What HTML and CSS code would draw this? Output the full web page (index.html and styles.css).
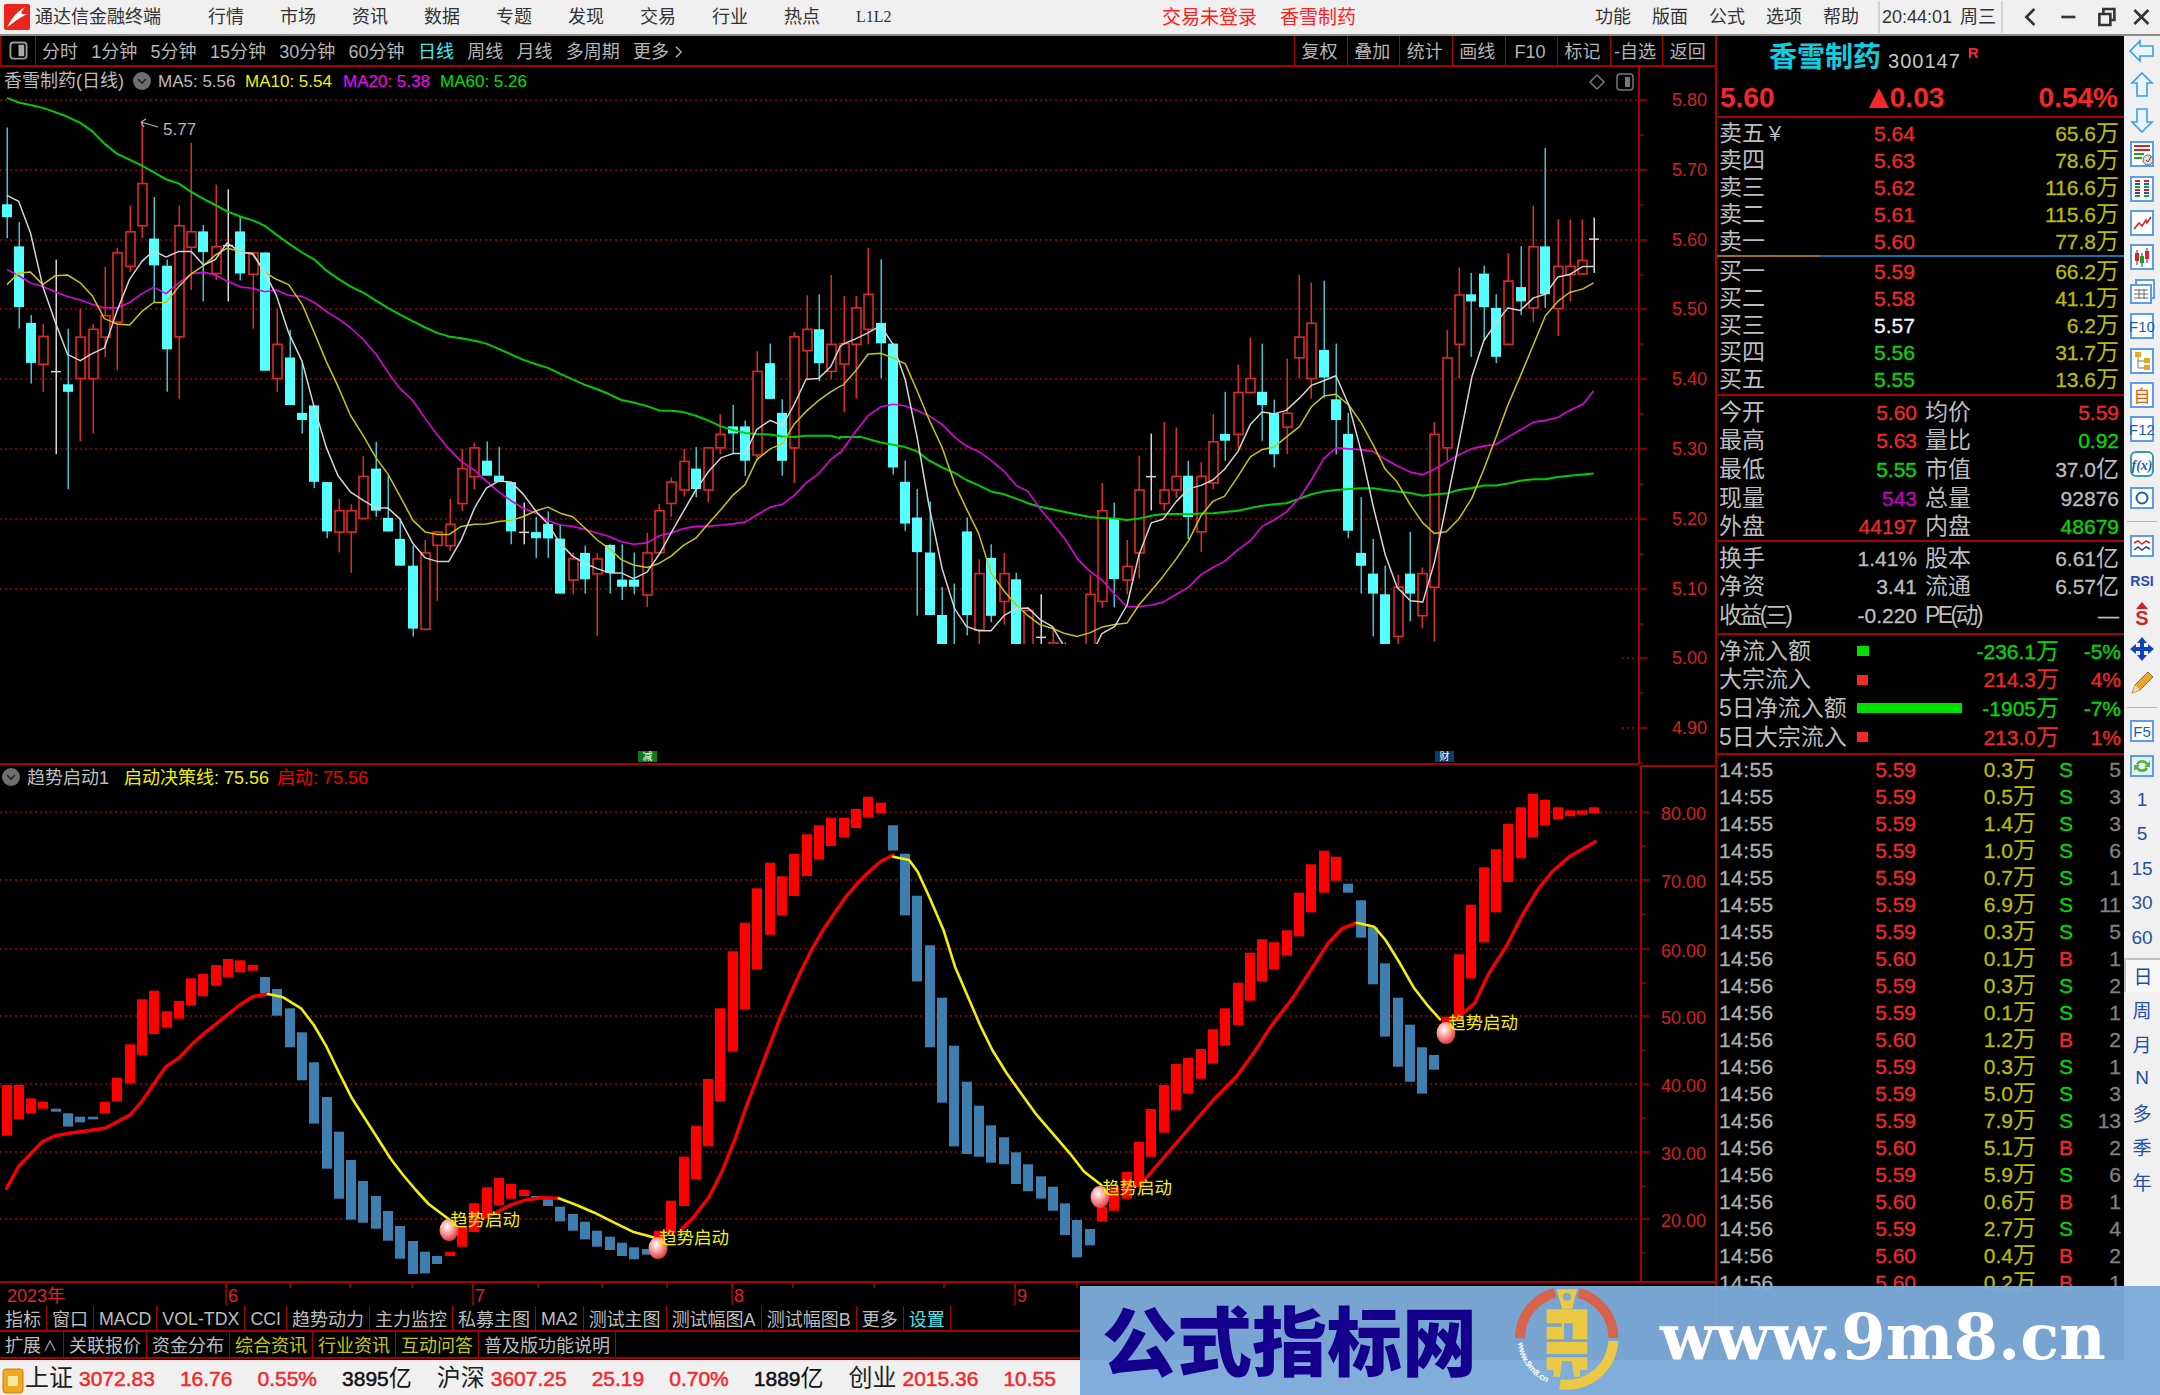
FILE: index.html
```html
<!DOCTYPE html>
<html lang="zh-CN">
<head>
<meta charset="utf-8">
<title>通达信金融终端</title>
<link rel="stylesheet" href="styles.css">
</head>
<body>
<div class="app">
  <header class="titlebar">
    <svg class="logo" viewBox="0 0 26 26"><rect width="26" height="26" rx="2" fill="#e8261c"/><path d="M3 23C8 15 10 10 21 3 16 9 16 11 23 10 15 14 12 17 3 23Z" fill="#fff"/></svg>
    <span class="app-name">通达信金融终端</span>
    <nav class="menu">
      <span>行情</span><span>市场</span><span>资讯</span><span>数据</span><span>专题</span><span>发现</span><span>交易</span><span>行业</span><span>热点</span><span class="l2">L1L2</span>
    </nav>
    <span class="alert alert-login">交易未登录</span>
    <span class="alert alert-stock">香雪制药</span>
    <nav class="menu menu-right">
      <span>功能</span><span>版面</span><span>公式</span><span>选项</span><span>帮助</span>
    </nav>
    <div class="clock"><span>20:44:01</span><span>周三</span></div>
    <div class="win-btns">
      <svg viewBox="0 0 36 24"><path d="M21 4 13 12 21 20" class="win-stroke"/></svg>
      <svg viewBox="0 0 36 24"><path d="M11 12H25" class="win-stroke"/></svg>
      <svg viewBox="0 0 36 24"><path d="M12 9H23V20H12ZM16 9V4H27V15H23" class="win-stroke"/></svg>
      <svg viewBox="0 0 36 24"><path d="M11 5 25 19M25 5 11 19" class="win-stroke"/></svg>
    </div>
  </header>

  <div class="main">
    <div class="left">
      <div class="toolbar">
        <div class="tb-toggle"><svg viewBox="0 0 20 20"><rect x="1.5" y="1.5" width="17" height="17" rx="3" class="tg-out"/><rect x="10" y="4" width="6" height="12" fill="#aaa"/></svg></div>
        <div class="tb-periods">
          <span>分时</span><span>1分钟</span><span>5分钟</span><span>15分钟</span><span>30分钟</span><span>60分钟</span><span class="on">日线</span><span>周线</span><span>月线</span><span>多周期</span><span class="more">更多<svg viewBox="0 0 10 16"><path d="M2 2 8 8 2 14" class="chev"/></svg></span>
        </div>
        <div class="tb-btns">
          <span>复权</span><span>叠加</span><span>统计</span><span>画线</span><span>F10</span><span>标记</span><span>-自选</span><span>返回</span>
        </div>
      </div>
      <svg id="chart" class="chart" viewBox="0 67 1715 1239" width="1715" height="1239"></svg>
      <div class="tabs tabs-1">
        <span>指标</span><span>窗口</span><span class="en">MACD</span><span class="en">VOL-TDX</span><span class="en">CCI</span><span>趋势动力</span><span>主力监控</span><span>私募主图</span><span class="en">MA2</span><span>测试主图</span><span>测试幅图A</span><span>测试幅图B</span><span>更多</span><span class="on">设置</span>
      </div>
      <div class="tabs tabs-2">
        <span>扩展<small>∧</small></span><span>关联报价</span><span>资金分布</span><span class="ye">综合资讯</span><span class="ye">行业资讯</span><span class="ye">互动问答</span><span>普及版功能说明</span>
      </div>
    </div>

    <aside class="panel">
      <div class="p-head"><span class="p-name">香雪制药</span><span class="p-code">300147</span><sup class="p-r">R</sup></div>
      <div class="p-price"><span>5.60</span><span><em class="tri"></em>0.03</span><span>0.54%</span></div>

      <div class="quote">
        <div><span class="q-l">卖五<u>￥</u></span><span class="red">5.64</span><span class="vol">65.6<i>万</i></span></div>
        <div><span class="q-l">卖四</span><span class="red">5.63</span><span class="vol">78.6<i>万</i></span></div>
        <div><span class="q-l">卖三</span><span class="red">5.62</span><span class="vol">116.6<i>万</i></span></div>
        <div><span class="q-l">卖二</span><span class="red">5.61</span><span class="vol">115.6<i>万</i></span></div>
        <div><span class="q-l">卖一</span><span class="red">5.60</span><span class="vol">77.8<i>万</i></span></div>
      </div>
      <div class="q-split"></div>
      <div class="quote quote-buy">
        <div><span class="q-l">买一</span><span class="red">5.59</span><span class="vol">66.2<i>万</i></span></div>
        <div><span class="q-l">买二</span><span class="red">5.58</span><span class="vol">41.1<i>万</i></span></div>
        <div><span class="q-l">买三</span><span class="white">5.57</span><span class="vol">6.2<i>万</i></span></div>
        <div><span class="q-l">买四</span><span class="green">5.56</span><span class="vol">31.7<i>万</i></span></div>
        <div><span class="q-l">买五</span><span class="green">5.55</span><span class="vol">13.6<i>万</i></span></div>
      </div>

      <div class="stats stats-a">
        <span>今开</span><b class="red">5.60</b><span>均价</span><b class="red">5.59</b>
        <span>最高</span><b class="red">5.63</b><span>量比</span><b class="green">0.92</b>
        <span>最低</span><b class="green">5.55</b><span>市值</span><b>37.0<i>亿</i></b>
        <span>现量</span><b class="pur">543</b><span>总量</span><b>92876</b>
        <span>外盘</span><b class="red">44197</b><span>内盘</span><b class="green">48679</b>
      </div>
      <div class="stats stats-b">
        <span>换手</span><b>1.41%</b><span>股本</span><b>6.61<i>亿</i></b>
        <span>净资</span><b>3.41</b><span>流通</span><b>6.57<i>亿</i></b>
        <span class="tight">收益(三)</span><b>-0.220</b><span class="tight">PE(动)</span><b>—</b>
      </div>

      <div class="flow">
        <span>净流入额</span><div><i class="bar bar-g" style="width:12px"></i></div><b class="green">-236.1<i>万</i></b><b class="green">-5%</b>
        <span>大宗流入</span><div><i class="bar bar-r" style="width:11px"></i></div><b class="red">214.3<i>万</i></b><b class="red">4%</b>
        <span>5日净流入额</span><div><i class="bar bar-g" style="width:105px"></i></div><b class="green">-1905<i>万</i></b><b class="green">-7%</b>
        <span>5日大宗流入</span><div><i class="bar bar-r" style="width:11px"></i></div><b class="red">213.0<i>万</i></b><b class="red">1%</b>
      </div>

      <div class="ticks">
        <div><span>14:55</span><b class="red">5.59</b><b class="vol">0.3<i>万</i></b><b class="green">S</b><b class="cnt">5</b></div>
        <div><span>14:55</span><b class="red">5.59</b><b class="vol">0.5<i>万</i></b><b class="green">S</b><b class="cnt">3</b></div>
        <div><span>14:55</span><b class="red">5.59</b><b class="vol">1.4<i>万</i></b><b class="green">S</b><b class="cnt">3</b></div>
        <div><span>14:55</span><b class="red">5.59</b><b class="vol">1.0<i>万</i></b><b class="green">S</b><b class="cnt">6</b></div>
        <div><span>14:55</span><b class="red">5.59</b><b class="vol">0.7<i>万</i></b><b class="green">S</b><b class="cnt">1</b></div>
        <div><span>14:55</span><b class="red">5.59</b><b class="vol">6.9<i>万</i></b><b class="green">S</b><b class="cnt">11</b></div>
        <div><span>14:55</span><b class="red">5.59</b><b class="vol">0.3<i>万</i></b><b class="green">S</b><b class="cnt">5</b></div>
        <div><span>14:56</span><b class="red">5.60</b><b class="vol">0.1<i>万</i></b><b class="red">B</b><b class="cnt">1</b></div>
        <div><span>14:56</span><b class="red">5.59</b><b class="vol">0.3<i>万</i></b><b class="green">S</b><b class="cnt">2</b></div>
        <div><span>14:56</span><b class="red">5.59</b><b class="vol">0.1<i>万</i></b><b class="green">S</b><b class="cnt">1</b></div>
        <div><span>14:56</span><b class="red">5.60</b><b class="vol">1.2<i>万</i></b><b class="red">B</b><b class="cnt">2</b></div>
        <div><span>14:56</span><b class="red">5.59</b><b class="vol">0.3<i>万</i></b><b class="green">S</b><b class="cnt">1</b></div>
        <div><span>14:56</span><b class="red">5.59</b><b class="vol">5.0<i>万</i></b><b class="green">S</b><b class="cnt">3</b></div>
        <div><span>14:56</span><b class="red">5.59</b><b class="vol">7.9<i>万</i></b><b class="green">S</b><b class="cnt">13</b></div>
        <div><span>14:56</span><b class="red">5.60</b><b class="vol">5.1<i>万</i></b><b class="red">B</b><b class="cnt">2</b></div>
        <div><span>14:56</span><b class="red">5.59</b><b class="vol">5.9<i>万</i></b><b class="green">S</b><b class="cnt">6</b></div>
        <div><span>14:56</span><b class="red">5.60</b><b class="vol">0.6<i>万</i></b><b class="red">B</b><b class="cnt">1</b></div>
        <div><span>14:56</span><b class="red">5.59</b><b class="vol">2.7<i>万</i></b><b class="green">S</b><b class="cnt">4</b></div>
        <div><span>14:56</span><b class="red">5.60</b><b class="vol">0.4<i>万</i></b><b class="red">B</b><b class="cnt">2</b></div>
        <div><span>14:56</span><b class="red">5.60</b><b class="vol">0.2<i>万</i></b><b class="red">B</b><b class="cnt">1</b></div>
      </div>
    </aside>

    <nav class="side">
      <svg class="ic" viewBox="0 0 30 30"><path d="M3 15 13 5V10H26V20H13V25Z" class="arrow"/></svg>
      <svg class="ic" viewBox="0 0 30 30"><path d="M15 3 25 13H20V26H10V13H5Z" class="arrow"/></svg>
      <svg class="ic" viewBox="0 0 30 30"><path d="M15 27 25 17H20V4H10V17H5Z" class="arrow"/></svg>
      <svg class="ic" viewBox="0 0 30 30"><rect x="4" y="3" width="22" height="24" class="box"/><path d="M7 7H23M7 11H23" stroke="#d02020" stroke-width="2"/><path d="M7 15H17M7 19H15" stroke="#20a020" stroke-width="2"/><circle cx="21" cy="21" r="5" fill="#ddd" stroke="#666"/><path d="M19 21 21 23 24 18" stroke="#444" fill="none"/></svg>
      <svg class="ic" viewBox="0 0 30 30"><rect x="4" y="3" width="22" height="24" class="box"/><path d="M8 7H13M17 7H22M8 16H13M17 16H22" stroke="#d02020" stroke-width="2"/><path d="M8 10H13M17 10H22M8 19H13M17 19H22" stroke="#2050c0" stroke-width="2"/><path d="M8 13H13M17 13H22M8 22H13M17 22H22" stroke="#20a020" stroke-width="2"/></svg>
      <svg class="ic" viewBox="0 0 30 30"><rect x="4" y="3" width="22" height="24" class="box"/><path d="M7 21 12 15 15 18 19 12 20 15 24 9" stroke="#e02020" stroke-width="1.6" fill="none"/></svg>
      <svg class="ic" viewBox="0 0 30 30"><rect x="4" y="3" width="22" height="24" class="box"/><path d="M10 8V23M20 6V21M15 11V25" stroke="#333"/><rect x="8" y="11" width="4" height="8" fill="#e02020"/><rect x="18" y="9" width="4" height="8" fill="#e02020"/><rect x="13" y="14" width="4" height="7" fill="#10a030"/></svg>
      <svg class="ic" viewBox="0 0 30 30"><rect x="9" y="3" width="18" height="18" class="box"/><rect x="4" y="8" width="20" height="18" class="box"/><path d="M7 13H21M7 17H21M7 21H21M12 12V22M17 12V22" stroke="#666"/></svg>
      <svg class="ic" viewBox="0 0 30 30"><rect x="4" y="3" width="22" height="24" class="box"/><text x="15" y="21" class="ic-t">F10</text></svg>
      <svg class="ic" viewBox="0 0 30 30"><rect x="4" y="3" width="22" height="24" class="box"/><path d="M11 10V22H17M11 15H17" stroke="#777" fill="none"/><rect x="8" y="6" width="6" height="5" fill="#e8a820"/><rect x="17" y="12" width="6" height="5" fill="#e8a820"/><rect x="17" y="19" width="6" height="5" fill="#e8a820"/></svg>
      <svg class="ic" viewBox="0 0 30 30"><rect x="4" y="3" width="22" height="24" class="box"/><text x="15" y="22" class="ic-z">自</text></svg>
      <svg class="ic" viewBox="0 0 30 30"><rect x="4" y="3" width="22" height="24" class="box"/><text x="15" y="21" class="ic-t">F12</text></svg>
      <svg class="ic" viewBox="0 0 30 30"><rect x="4" y="3" width="22" height="24" rx="5" class="box box-teal"/><text x="15" y="21" class="ic-f">f(x)</text></svg>
      <svg class="ic" viewBox="0 0 30 30"><rect x="4" y="5" width="22" height="20" class="box"/><circle cx="15" cy="15" r="5.5" fill="none" stroke="#2060b0" stroke-width="2"/></svg>
      <hr class="side-sep">
      <svg class="ic" viewBox="0 0 30 30"><rect x="4" y="5" width="22" height="20" class="box"/><path d="M7 12 11 10 15 13 19 10 23 12" stroke="#e02020" stroke-width="1.5" fill="none"/><path d="M7 19 11 16 15 19 19 16 23 18" stroke="#2040c0" stroke-width="1.5" fill="none"/></svg>
      <svg class="ic" viewBox="0 0 30 30"><text x="15" y="21" class="ic-rsi">RSI</text></svg>
      <svg class="ic" viewBox="0 0 30 30"><text x="15" y="25" class="ic-d">S</text><path d="M15 2 21 9H9Z" fill="#d02020"/></svg>
      <svg class="ic" viewBox="0 0 30 30"><path d="M15 3 20 9H17V13H21V10L27 15 21 20V17H17V21H20L15 27 10 21H13V17H9V20L3 15 9 10V13H13V9H10Z" fill="#1040c0"/></svg>
      <svg class="ic" viewBox="0 0 30 30"><path d="M5 25 8 17 21 4 26 9 13 22Z" fill="#e8a830" stroke="#8a6a30"/><path d="M5 25 8 17 13 22Z" fill="#eed9a0"/></svg>
      <hr class="side-sep">
      <svg class="ic" viewBox="0 0 30 30"><rect x="4" y="5" width="22" height="20" class="box"/><text x="15" y="21" class="ic-t">F5</text></svg>
      <svg class="ic" viewBox="0 0 30 30"><rect x="4" y="5" width="22" height="20" class="box box-grey"/><path d="M9 13C11 8 18 8 21 12L23 10V16H17L19 14C17 11 13 11 11 14ZM21 18C19 22 12 22 9 18L7 20V14H13L11 16C13 19 17 19 19 16Z" fill="#50b840"/></svg>
      <span class="per">1</span><span class="per">5</span><span class="per">15</span><span class="per">30</span><span class="per">60</span>
      <span class="per per-on">日</span><span class="per">周</span><span class="per">月</span><span class="per">N</span><span class="per">多</span><span class="per">季</span><span class="per">年</span>
    </nav>
  </div>

  <footer class="status">
    <svg class="st-ic" viewBox="0 0 22 26"><rect x="1" y="1" width="20" height="24" rx="3" fill="#f0a820" stroke="#c88010"/><rect x="6" y="8" width="10" height="10" fill="#fce8a0"/></svg>
    <span class="st-l">上证</span><b class="red">3072.83</b><b class="red">16.76</b><b class="red">0.55%</b><b class="st-b">3895<i>亿</i></b>
    <span class="st-l">沪深</span><b class="red">3607.25</b><b class="red">25.19</b><b class="red">0.70%</b><b class="st-b">1889<i>亿</i></b>
    <span class="st-l">创业</span><b class="red">2015.36</b><b class="red">10.55</b>
  </footer>

  <aside class="watermark">
    <span class="wm-cn">公式指标网</span>
    <svg class="wm-logo" viewBox="0 0 140 109">
      <path d="M20 52A46.7 46.7 0 0 1 55 6.8" class="wm-arc wm-arc-r"/>
      <path d="M78.4 6.8A46.7 46.7 0 0 1 113.4 52" class="wm-arc wm-arc-r"/>
      <path d="M113.4 55A46.7 46.7 0 0 1 60 98.2" class="wm-arc wm-arc-y"/>
      <path id="wmArc" d="M18 57A49 49 0 0 0 58 100" fill="none"/>
      <text class="wm-small"><textPath href="#wmArc">www.9m8.cn</textPath></text>
      <g transform="scale(.3333)" fill="#ecc944">
        <path d="M170 10H232L216 68H186Z"/>
        <circle cx="201" cy="32" r="12" fill="#7ba9d8"/>
        <path d="M140 70H262V160H218V112H192V160H140V122H185V112H140Z"/>
        <path d="M140 168H262V204H140ZM140 214H262V252H240V272H222L215 225H186L180 272H160V252H140Z"/>
      </g>
    </svg>
    <span class="wm-en">www.9m8.cn</span>
  </aside>
</div>
<script src="script.js"></script>
</body>
</html>
```

FILE: styles.css
```css
* { box-sizing: border-box; }
html, body { margin: 0; padding: 0; background: #000; }
body { font-family: "Liberation Sans", "Noto Sans CJK SC", sans-serif; color: #bdbdbd; }
i, em { font-style: normal; }
u { text-decoration: none; }

.app { position: relative; width: 2160px; height: 1395px; overflow: hidden; display: flex; flex-direction: column; background: #000; }

/* title bar */
.titlebar { height: 36px; flex: none; display: flex; align-items: center; background: #f0f0f0; border-bottom: 2px solid #8c8c8c; color: #333; font-size: 18px; line-height: 1; padding: 0 0 0 4px; }
.logo { width: 26px; height: 26px; flex: none; }
.app-name { margin-left: 5px; width: 126px; white-space: nowrap; }
.menu { display: flex; align-items: center; gap: 36px; margin-left: 47px; }
.menu span { width: 36px; white-space: nowrap; }
.l2 { font-family: "Liberation Serif", serif; font-size: 16px; }
.alert { color: #ff2020; font-size: 19px; white-space: nowrap; }
.alert-login { margin-left: 270px; }
.alert-stock { margin-left: 23px; }
.menu-right { gap: 21px; margin-left: auto; margin-right: 19px; }
.clock { width: 125px; height: 32px; flex: none; display: flex; align-items: center; justify-content: space-between; padding: 0 5px 0 2px; border-left: 2px solid #d4d4d4; border-right: 2px solid #d4d4d4; }
.win-btns { display: flex; width: 157px; flex: none; padding-left: 10px; }
.win-btns svg { width: 36px; height: 24px; flex: 1; }
.win-stroke { fill: none; stroke: #333; stroke-width: 2.6; }

/* main frame */
.main { flex: 1; min-height: 0; display: flex; }
.left { width: 1715px; flex: none; display: flex; flex-direction: column; }

/* toolbar */
.toolbar { height: 31px; flex: none; display: flex; align-items: stretch; border-bottom: 2px solid #a80000; font-size: 18px; line-height: 1; color: #b4b4b4; }
.tb-toggle { width: 36px; flex: none; display: flex; align-items: center; justify-content: center; border-left: 1px solid #a80000; border-right: 1px solid #a80000; }
.tb-toggle svg { width: 19px; height: 19px; }
.tg-out { fill: none; stroke: #999; stroke-width: 2; }
.tb-periods { display: flex; align-items: center; gap: 13.3px; margin-left: 6px; white-space: nowrap; padding-top: 2px; }
.tb-periods .on { color: #40e8f0; }
.more { display: flex; align-items: center; gap: 5px; }
.more svg { width: 9px; height: 14px; }
.chev { fill: none; stroke: #b4b4b4; stroke-width: 1.6; }
.tb-btns { margin-left: auto; display: flex; }
.tb-btns span { width: 52.6px; display: flex; align-items: center; justify-content: center; padding: 2px 3px 0 0; border-left: 1px solid #a80000; white-space: nowrap; }

/* chart */
.chart { display: block; flex: none; background: #000; }
.chart text { font-family: "Liberation Sans", "Noto Sans CJK SC", sans-serif; }
.t-ax { fill: #d42020; font-size: 18px; }
.t-date { fill: #e02020; font-size: 18px; }
.t-leg { font-size: 18px; dominant-baseline: central; }
.t-num { font-size: 17px; dominant-baseline: central; }
.c-grey { fill: #bdbdbd; }
.c-ye { fill: #f0f000; }
.c-mag { fill: #ff00ff; }
.c-gr { fill: #00e000; }
.c-red { fill: #f00000; }
.grid { stroke: #a00000; stroke-width: 1.5; stroke-dasharray: 2 3; fill: none; }
.axis { stroke: #a80000; stroke-width: 2; fill: none; }
.tick { stroke: #a80000; stroke-width: 1.5; fill: none; }
.ma { fill: none; stroke-linejoin: round; }
.ma5 { stroke: #d4d4d4; stroke-width: 1.5; }
.ma10 { stroke: #c8c800; stroke-width: 1.5; }
.ma20 { stroke: #e000e0; stroke-width: 1.6; }
.ma60 { stroke: #00cc00; stroke-width: 2; }
.wick-r { fill: #e02828; }
.wick-c { fill: #3ec6cc; }
.wick-w { fill: #d8d8d8; }
.body-c { fill: #54ffff; }
.body-r { fill: #000; stroke: #e02828; stroke-width: 1.6; }
.bar-red { fill: #ff0000; }
.bar-blue { fill: #3f7fb0; }
.ln-r { fill: none; stroke: #f40000; stroke-width: 3.4; stroke-linejoin: round; stroke-linecap: round; }
.ln-y { fill: none; stroke: #f4f000; stroke-width: 2.6; stroke-linejoin: round; stroke-linecap: round; }
.t-sig { fill: #f4f000; font-size: 17.5px; dominant-baseline: central; }
.t-hi { fill: #b4b4b4; font-size: 17px; dominant-baseline: central; }
.hi-arrow { fill: none; stroke: #b4b4b4; stroke-width: 1.3; }
.dd { fill: #6e6e6e; }
.dd-mark { fill: none; stroke: #222; stroke-width: 1.6; }
.cfg { fill: none; stroke: #777; stroke-width: 1.5; }
.badge-t { fill: #fff; font-size: 10px; text-anchor: middle; dominant-baseline: central; }

/* bottom tabs */
.tabs { flex: none; display: flex; border-bottom: 2px solid #a80000; font-size: 18px; line-height: 1; color: #bdbdbd; background: #000; white-space: nowrap; }
.tabs span { display: flex; align-items: center; padding: 3px 5px 0; border-right: 1px solid #a80000; }
.tabs small { font-size: 14px; margin: 0 1px 0 2px; }
.tabs .en { font-size: 17.8px; }
.tabs-1 { height: 26px; }
.tabs-2 { height: 27px; }
.tabs .on { color: #40e8f0; }
.tabs .ye { color: #c8c800; }

/* right quote panel */
.panel { width: 409px; flex: none; border-left: 2px solid #a80000; display: flex; flex-direction: column; font-size: 23px; line-height: 1; color: #bdbdbd; white-space: nowrap; overflow: hidden; }
.red { color: #f42828; }
.green { color: #00dc00; }
.white { color: #f4f4f4; }
.pur { color: #c000c0; }
.vol { color: #bcbc00; }
.cnt { color: #808080; }
.p-head { height: 44px; flex: none; display: flex; align-items: center; padding-left: 52px; }
.p-name { font-size: 28px; font-weight: 700; color: #10cce0; }
.p-code { font-size: 20px; margin-left: 7px; margin-top: 6px; letter-spacing: 1px; color: #c4c4c4; }
.p-r { font-size: 15px; color: #f42828; margin: 0 0 12px 7px; font-weight: 700; }
.p-price { height: 38px; flex: none; display: flex; justify-content: space-between; align-items: center; padding: 0 6px 0 3px; border-bottom: 2px solid #a80000; color: #f42828; font-size: 28px; font-weight: 700; }
.p-price span { display: flex; align-items: center; }
.tri { width: 0; height: 0; margin-right: 1px; border-left: 10px solid transparent; border-right: 10px solid transparent; border-bottom: 20px solid #f42828; }
.quote { height: 137px; flex: none; padding-top: 2px; }
.quote-buy { padding-top: 1px; }
.quote > div { height: 27px; display: grid; grid-template-columns: 155px 1fr auto; align-items: center; padding: 0 5px 0 2px; font-size: 21px; -webkit-text-stroke: .3px currentColor; }
.quote i { font-size: 23px; -webkit-text-stroke: 0; }
.q-l { font-size: 23px; -webkit-text-stroke: 0; }
.q-l u { font-size: 20px; }
.q-split { height: 2px; flex: none; background: linear-gradient(90deg, #a07018 0 103px, #1a70a8 103px); }
.stats { flex: none; display: grid; grid-template-columns: 64px 134px 101px 1fr; grid-auto-rows: 28.6px; align-items: center; padding: 2px 5px 0 2px; border-top: 2px solid #a80000; }
.stats b, .flow b, .ticks b { font-weight: 400; font-size: 21px; justify-self: end; -webkit-text-stroke: .3px currentColor; }
.stats span:nth-child(4n+3) { padding-left: 8px; }
.stats i, .flow i, .ticks i { font-size: 23px; -webkit-text-stroke: 0; }
.tight { letter-spacing: -2.6px; }
.stats-a { height: 146px; }
.stats-b { height: 93px; }
.flow { flex: none; height: 120px; border-top: 2px solid #a80000; display: grid; grid-template-columns: 138px 105px 97px 62px; grid-auto-rows: 28.6px; align-items: center; padding-top: 2px; padding-left: 2px; }
.flow div { display: flex; align-items: center; }
.flow .bar { display: block; height: 10px; }
.bar-g { background: #00e000; }
.bar-r { background: #f42828; }
.ticks { flex: none; border-top: 2px solid #a80000; padding-top: 1px; }
.ticks > div { height: 27px; display: grid; grid-template-columns: 88px 109px 120px 37px 48px; align-items: center; padding-left: 2px; }
.ticks span { font-size: 21px; letter-spacing: .4px; color: #b0b0b0; -webkit-text-stroke: .3px currentColor; }

/* right icon rail */
.side { width: 36px; flex: none; display: flex; flex-direction: column; align-items: center; gap: 4.4px; background: #f0f0f0; }
.ic { width: 30px; height: 30px; flex: none; }
.arrow { fill: #eaf4ff; stroke: #3c9cec; stroke-width: 1.6; }
.box { fill: #fff; stroke: #5a9cf0; stroke-width: 2; }
.box-teal { stroke: #30a0a0; }
.box-grey { fill: #e8f0f8; }
.ic-t { font-family: "Liberation Sans", sans-serif; font-size: 15px; fill: #1860b0; text-anchor: middle; }
.ic-z { font-family: "Noto Sans CJK SC", sans-serif; font-size: 17px; fill: #e06018; text-anchor: middle; }
.ic-f { font-family: "Liberation Serif", serif; font-size: 14px; font-style: italic; font-weight: 700; fill: #1860b0; text-anchor: middle; }
.ic-rsi { font-family: "Liberation Sans", sans-serif; font-size: 14px; font-weight: 700; fill: #2848c0; text-anchor: middle; }
.ic-d { font-family: "Liberation Sans", sans-serif; font-size: 20px; font-weight: 700; fill: #c82828; text-anchor: middle; }
.side-sep { width: 30px; height: 1px; margin: 4px 0; flex: none; border: 0; background: #b4b4b4; }
.per { width: 36px; height: 30px; flex: none; display: flex; align-items: center; justify-content: center; color: #2050a4; font-size: 19px; }
.per-on { height: 34px; margin: 1px 0 -2px; background: #f8f8f8; border-top: 2px solid #c0c0c0; border-left: 2px solid #c0c0c0; }

/* status bar */
.status { height: 35px; flex: none; display: flex; align-items: baseline; gap: 25px; background: #f0f0f0; border-top: 2px solid #e8e8e8; color: #222; padding: 4px 0 0 2px; white-space: nowrap; line-height: 1; }
.st-ic { width: 22px; height: 26px; flex: none; margin-right: -24px; align-self: center; }
.st-l { font-size: 24px; margin-right: -19px; }
.status b { font-size: 21px; font-weight: 400; -webkit-text-stroke: .5px currentColor; }
.status .st-b { color: #111; }
.status .st-b i { font-size: 23px; -webkit-text-stroke: 0; }

/* watermark overlay */
.watermark { position: absolute; left: 1080px; top: 1286px; width: 1080px; height: 109px; display: flex; align-items: center; background: rgba(124, 170, 217, .965); white-space: nowrap; }
.wm-cn { margin: -6px 0 0 22px; width: 398px; font-family: "Noto Sans CJK SC", sans-serif; font-weight: 900; font-size: 75px; line-height: 1; color: #14008c; white-space: nowrap; }
.wm-logo { width: 140px; height: 109px; flex: none; }
.wm-arc { fill: none; stroke-width: 10; }
.wm-arc-r { stroke: #d8634c; }
.wm-arc-y { stroke: #ecc944; }
.wm-small { fill: #fff; font-family: "Liberation Sans", sans-serif; font-size: 8.5px; font-weight: 700; }
.wm-en { margin: -8px 0 0 20px; font-family: "DejaVu Serif", serif; font-weight: 700; font-size: 64px; line-height: 1; color: #fdfdfd; }
```

FILE: script.js
```js
// Chart data read off the daily K-line: each candle is [kind, high, bodyTop, bodyBottom, low],
// kept in the trace units of the two capture windows and converted to page pixels below.
const SVG = document.getElementById('chart');
const stepX = 12.31, cx = i => Math.round(6.5 + stepX * i);
const A = { x: p => p / 1.867, y: p => 90 + p / 2.8 };
const B = { x: p => 840 + p / 1.867, y: p => 130 + p / 2.8 };
const S1 = { x: p => p / 1.96, y: p => 740 + p / 3 };
const S2 = { x: p => 800 + p / 1.742, y: p => 740 + p / 3 };

const candlesA = [
['c',105,320,356,415],['c',370,438,608,668],['c',630,652,764,822],['r',655,690,768,845],['w',475,788,788,1020],
['c',668,824,845,1118],['r',612,692,808,983],['r',655,670,808,962],['r',495,632,692,748],['r',442,456,650,785],
['r',323,397,494,510],['r',90,262,380,415],['c',300,416,491,595],['c',475,492,726,845],['r',323,380,691,865],
['r',148,397,440,560],['c',378,396,454,592],['r',265,439,514,532],['w',278,435,435,592],['c',355,396,514,533],
['r',455,456,516,668],['c',455,455,786,786],['r',612,712,808,845],['c',672,749,882,882],['c',762,904,924,962],
['c',882,883,1097,1115],['c',1097,1098,1236,1255],['r',1145,1178,1238,1295],['r',1160,1178,1238,1352],['r',1025,1082,1200,1200],
['c',985,1060,1178,1195],['c',1080,1198,1236,1236],['c',1200,1257,1332,1332],['c',1275,1332,1508,1530],['r',1260,1296,1510,1510],
['r',1235,1238,1275,1430],['r',1145,1216,1276,1290],['r',1005,1060,1158,1178],['r',987,1002,1083,1118],['c',984,1038,1080,1080],
['c',1000,1080,1098,1098],['c',1098,1098,1236,1272],['w',1155,1238,1238,1272],['c',1195,1238,1255,1310],['c',1180,1215,1256,1310],
['c',1215,1256,1410,1410],['r',1295,1313,1372,1412],['c',1275,1296,1370,1410],['r',1296,1313,1355,1528],['c',1272,1274,1352,1410],
['c',1272,1371,1391,1428],['c',1295,1371,1391,1412],['r',1240,1296,1414,1448],['r',1160,1178,1296,1296],['r',1085,1098,1158,1195],
['r',1005,1040,1120,1138],['c',1000,1060,1117,1140],['r',1000,1002,1120,1155],['r',908,964,1002,1020],['c',882,942,962,1020],
['c',925,942,1038,1080],['r',732,788,1022,1040],['c',710,765,865,865],['c',866,904,1038,1080],['r',678,691,1002,1100],
['r',575,670,730,810],['c',572,670,765,815],['r',518,712,788,810]];

const candlesB = [
['r',465,598,655,790],['r',465,498,600,752],['r',330,460,558,600],['c',362,540,597,695],['c',597,598,945,965],
['c',925,985,1102,1122],['c',1005,1085,1182,1360],['c',1040,1183,1358,1358],['c',1280,1358,1520,1520],['c',1270,1445,1500,1500],
['c',1085,1124,1358,1415],['r',1202,1242,1400,1445],['c',1160,1198,1360,1378],['r',1185,1242,1320,1385],['c',1240,1258,1480,1480],
['r',1340,1345,1445,1480],['w',1300,1420,1420,1500],['r',1390,1436,1500,1500],['c',1435,1500,1520,1520],['c',1445,1500,1520,1520],
['r',1245,1300,1460,1480],['r',988,1066,1320,1338],['c',1043,1088,1257,1337],['r',1148,1222,1260,1300],['r',912,1008,1184,1256],
['w',850,970,970,1065],['r',817,1008,1046,1065],['r',833,970,1008,1030],['c',926,968,1084,1145],['r',930,970,1125,1182],
['r',795,873,988,1005],['c',733,851,870,926],['r',657,735,852,890],['r',581,696,735,735],['c',598,733,770,870],
['c',755,793,908,945],['r',640,793,832,908],['r',405,580,638,695],['r',427,541,696,752],['c',422,616,693,750],
['c',598,754,812,908],['c',792,851,1122,1142],['c',1028,1184,1220,1298],['c',1145,1242,1298,1418],['c',1220,1300,1460,1500],
['r',1245,1280,1418,1440],['c',1125,1242,1298,1375],['r',1225,1242,1360,1395],['r',818,852,1280,1432],['r',560,638,890,925],
['r',385,462,600,695],['c',400,460,480,635],['c',380,402,496,590],['c',460,498,635,652],['r',345,423,600,600],
['c',325,440,480,518],['r',212,327,498,538],['c',50,326,460,498],['r',250,382,500,577],['r',250,382,405,480],
['r',250,365,403,403],['w',245,305,305,400]];

const flat = s => s.trim().split(/\s+/).map(Number);
const pairs = (s, t) => { const n = flat(s), o = []; for (let i = 0; i < n.length; i += 2) o.push(t.x(n[i]).toFixed(1) + ',' + t.y(n[i + 1]).toFixed(1)); return o.join(' '); };

const ma = {
 ma5: [`13 295 35 312 57 400 80 550 103 650 126 740 150 758 172 738 195 722 218 620 242 530 265 480 287 450 310 468 334 452 357 452 380 490 402 475 424 428 450 455 472 458 494 510 516 575 539 680 564 760 587 890 609 1000 631 1080 654 1125 679 1150 702 1170 724 1170 746 1200 771 1270 794 1310 816 1320 838 1320 861 1260 886 1170 908 1115 931 1095 954 1098 976 1130 1001 1180 1023 1215 1046 1270 1069 1305 1091 1325 1115 1340 1138 1352 1160 1352 1183 1368 1208 1350 1231 1300 1253 1240 1276 1180 1299 1120 1322 1070 1346 1030 1368 1018 1391 1018 1413 950 1438 925 1461 940 1483 880 1505 810 1528 808 1551 775 1568 720`,
 `5 600 29 585 52 568 76 548 99 600 122 700 144 860 166 1050 191 1230 214 1340 236 1390 259 1402 282 1402 306 1360 329 1340 351 1338 373 1370 396 1390 420 1450 443 1480 466 1480 489 1410 513 1390 536 1330 558 1190 581 1100 603 1090 628 1040 651 1005 674 995 696 980 718 950 743 900 766 825 788 790 810 795 833 785 858 750 880 715 903 702 926 688 950 770 973 900 995 1050 1018 1190 1040 1280 1065 1318 1088 1322 1110 1210 1132 1050 1155 880 1180 690 1202 590 1225 540 1247 498 1270 505 1295 470 1317 460 1340 412 1362 405 1387 382 1407 382`],
 ma10: [`13 545 35 512 57 510 80 545 103 520 126 518 150 540 172 575 195 640 218 655 242 658 265 620 287 595 310 595 334 550 357 515 380 492 402 462 424 443 450 452 472 460 494 510 516 530 539 545 564 600 587 680 609 760 631 830 654 910 679 970 702 1030 724 1075 746 1135 771 1205 794 1238 816 1245 838 1245 861 1222 886 1216 908 1215 931 1208 954 1205 976 1195 1001 1178 1023 1168 1046 1185 1069 1195 1091 1225 1115 1260 1138 1285 1160 1315 1183 1330 1208 1337 1231 1325 1253 1305 1276 1275 1299 1255 1322 1215 1346 1175 1368 1135 1391 1105 1413 1035 1438 1005 1461 990 1483 935 1505 900 1528 870 1551 845 1568 830`,
 `5 715 29 675 52 628 76 625 99 638 122 655 144 730 166 810 191 890 214 990 236 1060 259 1130 282 1240 306 1290 329 1330 351 1360 373 1385 396 1395 420 1410 443 1418 466 1408 489 1392 513 1385 536 1380 558 1330 581 1290 603 1250 628 1200 651 1150 674 1080 696 1040 718 1025 743 970 766 915 788 895 810 888 833 860 858 830 880 775 903 745 926 740 950 770 973 820 995 880 1018 950 1040 985 1065 1050 1088 1100 1110 1130 1132 1125 1155 1090 1180 1030 1202 950 1225 860 1247 770 1270 690 1295 600 1317 520 1340 480 1362 455 1387 445 1407 428`],
 ma20: [`13 503 35 520 57 540 80 550 103 565 126 578 150 588 172 600 195 610 218 610 242 595 265 570 287 552 310 570 334 540 357 515 380 510 402 518 424 535 450 552 472 555 494 565 516 560 539 575 564 578 587 595 609 620 631 640 654 665 679 700 702 740 724 790 746 835 771 870 794 920 816 965 838 1005 861 1040 886 1065 908 1095 931 1125 954 1150 976 1170 1001 1185 1023 1205 1046 1218 1069 1222 1091 1230 1115 1240 1138 1250 1160 1265 1183 1272 1208 1268 1231 1248 1253 1240 1276 1228 1299 1222 1322 1222 1346 1218 1368 1215 1391 1210 1413 1190 1438 1168 1461 1160 1483 1135 1505 1100 1528 1075 1551 1035 1568 1015`,
 `0 905 29 845 52 800 76 775 99 768 122 772 144 785 166 800 191 825 214 860 236 885 259 900 282 925 306 955 329 995 351 1012 373 1060 396 1100 420 1145 443 1200 466 1235 489 1260 513 1300 536 1335 558 1335 581 1330 603 1322 628 1300 651 1280 674 1245 696 1225 718 1208 743 1175 766 1150 788 1110 810 1092 833 1070 858 1030 880 980 903 920 926 890 950 893 973 895 995 900 1018 922 1040 940 1065 958 1088 965 1110 950 1132 930 1155 910 1180 892 1202 885 1225 880 1247 860 1270 840 1295 818 1317 813 1340 805 1362 785 1387 768 1407 730`],
 ma60: [`13 22 35 35 57 42 80 50 103 62 126 75 150 92 172 115 195 150 218 178 242 195 265 212 287 230 310 250 334 262 357 285 380 305 402 322 424 340 450 355 472 365 494 380 516 405 539 430 564 455 587 475 609 505 631 528 654 550 679 568 702 590 724 610 746 628 771 648 794 665 816 680 838 690 861 695 886 702 908 710 931 725 954 740 976 755 1001 768 1023 778 1046 795 1069 810 1091 825 1115 838 1138 852 1160 868 1183 875 1208 885 1231 897 1253 898 1276 902 1299 912 1322 925 1346 942 1368 952 1391 960 1413 963 1438 965 1461 970 1483 972 1505 968 1528 968 1551 968 1568 975`,
 `0 860 40 860 76 875 122 888 144 900 166 925 191 945 214 960 236 980 259 995 282 1012 306 1020 329 1032 351 1045 373 1055 396 1062 420 1070 443 1077 466 1084 489 1086 513 1088 536 1092 558 1088 581 1080 603 1075 628 1075 651 1076 674 1074 696 1073 718 1070 743 1066 766 1058 788 1052 810 1048 833 1045 858 1032 880 1020 903 1012 926 1008 950 1005 973 1003 995 1003 1018 1008 1040 1012 1065 1016 1088 1024 1110 1020 1132 1018 1155 1008 1180 1002 1202 995 1225 995 1247 990 1270 982 1295 978 1317 978 1340 972 1362 968 1387 965 1407 962`]
};

// [kind, top, bottom] for each indicator column
const barsA = `r 1035 1187 r 1035 1138 r 1075 1120 r 1085 1106 b 1106 1115 b 1120 1160 b 1130 1147 b 1130 1138 r 1085 1120 r 1013 1084 r 913 1030 r 778 945 r 752 882 r 814 863 r 783 836 r 715 796 r 702 769 r 675 737 r 657 711 r 661 697 r 675 692 b 711 760 b 747 827 b 805 922 b 877 1021 b 967 1151 b 1071 1286 b 1175 1376 b 1260 1439 b 1323 1448 b 1368 1466 b 1413 1502 b 1458 1556 b 1503 1602 b 1535 1600 b 1548 1572 r 1535 1548 r 1460 1520 r 1390 1476 r 1342 1430 r 1314 1395 r 1332 1376 r 1350 1368 b 1368 1378 b 1375 1398 b 1400 1444 b 1422 1472 b 1445 1498 b 1472 1520 b 1490 1530 b 1508 1548 b 1522 1558 b 1527 1544 r 1472 1530 r 1382 1480 r 1250 1398 r 1157 1318 r 1017 1219 r 805 1084 r 634 935 r 548 808 r 445 688 r 368 584 r 409 526 r 342 468`;
const barsB = `r 283 408 r 256 359 r 233 318 r 233 291 r 207 264 r 170 232 r 188 220 b 256 332 b 341 526 b 467 724 b 616 922 b 773 1088 b 917 1219 b 1025 1242 b 1097 1250 b 1156 1268 b 1192 1273 b 1237 1332 b 1273 1354 b 1309 1376 b 1340 1412 b 1390 1485 b 1440 1552 b 1467 1516 r 1400 1444 r 1340 1412 r 1296 1376 r 1206 1340 r 1107 1250 r 1035 1178 r 972 1111 r 954 1061 r 927 1016 r 868 971 r 805 917 r 728 855 r 638 782 r 598 724 r 607 688 r 571 647 r 458 589 r 373 517 r 332 458 r 350 422 b 431 458 b 481 593 b 562 733 b 670 890 b 773 980 b 854 1025 b 922 1061 b 945 989 r 830 860 r 643 845 r 494 715 r 382 607 r 328 517 r 251 426 r 202 355 r 161 292 r 179 256 r 202 238 r 211 229 r 211 224 r 202 220`;

const lines = [
 ['ln-r', S1, `13 1345 36 1280 61 1240 83 1205 107 1188 134 1180 158 1175 182 1170 206 1165 230 1145 255 1125 280 1080 300 1035 325 980 350 955 375 915 400 880 425 850 445 825 470 795 495 770 525 762`],
 ['ln-y', S1, `525 762 555 772 590 805 615 855 640 920 665 1000 690 1075 715 1135 740 1195 765 1255 790 1305 815 1350 840 1392 880 1438`],
 ['ln-r', S1, `950 1430 970 1420 1000 1395 1030 1380 1060 1373 1095 1375`],
 ['ln-y', S1, `1095 1375 1130 1395 1165 1418 1200 1445 1240 1475 1280 1492`],
 ['ln-r', S1, `1335 1470 1360 1430 1390 1370 1415 1295 1440 1200 1465 1090 1490 990 1510 910 1530 830 1550 760 1568 700`],
 ['ln-r', S2, `0 700 20 630 40 570 60 520 80 470 100 430 120 395 140 365 162 345`],
 ['ln-y', S2, `162 350 190 360 205 395 225 470 250 570 270 680 295 780 315 860 335 930 360 1000 385 1060 410 1120 440 1180 470 1240 495 1295 525 1335`],
 ['ln-r', S2, `600 1320 630 1260 660 1200 690 1140 720 1080 760 1010 790 940 820 860 860 770 890 690 920 610 945 565 970 548`],
 ['ln-y', S2, `970 548 1000 560 1020 600 1045 670 1070 745 1095 800 1115 838`],
 ['ln-r', S2, `1155 820 1175 790 1200 700 1230 620 1260 520 1285 450 1310 395 1340 350 1385 305`]
];

const o = [];
const rect = (c, x, y, w, h) => o.push(`<rect class="${c}" x="${x}" y="${y.toFixed(1)}" width="${w}" height="${Math.max(h, 1).toFixed(1)}"/>`);
const seg = (c, x1, y1, x2, y2) => o.push(`<path class="${c}" d="M${x1} ${y1}L${x2} ${y2}"/>`);
const txt = (c, x, y, s) => o.push(`<text class="${c}" x="${x}" y="${y}">${s}</text>`);

o.push(`<defs><clipPath id="main"><rect x="0" y="67" width="1639" height="577"/></clipPath>
<radialGradient id="ball" cx=".4" cy=".35" r=".75"><stop offset="0" stop-color="#fff"/><stop offset=".45" stop-color="#f79a9a"/><stop offset="1" stop-color="#d81e28"/></radialGradient></defs>`);

// main pane grid and axis
for (let k = 0; k < 10; k++) {
  const y = Math.round(100 + 69.8 * k);
  if (k < 8) seg('grid', 0, y, 1639, y); else seg('grid', 1622, y, 1639, y);
  seg('tick', 1639, y, 1647, y);
  seg('tick', 1639, y + 35, 1643, y + 35);
  txt('t-ax', 1672, y + 6, (5.8 - k / 10).toFixed(2));
}
// main pane candles
o.push('<g clip-path="url(#main)">');
function candle(i, d, t) {
  const x = cx(i), hi = t.y(d[1]), top = t.y(d[2]), bot = t.y(d[3]), lo = t.y(d[4]);
  if (d[0] === 'c') { rect('wick-c', x - 0.5, hi, 1.5, lo - hi); rect('body-c', x - 5, top, 10, bot - top); }
  else if (d[0] === 'r') {
    rect('wick-r', x - 0.5, hi, 1.5, top - hi); rect('wick-r', x - 0.5, bot, 1.5, lo - bot);
    rect('body-r', x - 4, top, 9, bot - top);
  } else { rect('wick-w', x - 0.5, hi, 1.5, lo - hi); rect('wick-w', x - 5, top - 0.5, 10, 1.5); }
}
candlesA.forEach((d, i) => candle(i, d, A));
candlesB.forEach((d, i) => candle(i + 68, d, B));
for (const k of ['ma60', 'ma20', 'ma10', 'ma5'])
  o.push(`<polyline class="ma ${k}" points="${pairs(ma[k][0], A)} ${pairs(ma[k][1], B)}"/>`);
o.push('</g>');

// legend lines and marks of the main pane
txt('t-leg c-grey', 4, 81, '香雪制药(日线)');
o.push('<circle class="dd" cx="142" cy="81" r="9"/><path class="dd-mark" d="M138 79l4 4 4-4"/>');
txt('t-num c-grey', 158, 81, 'MA5: 5.56');
txt('t-num c-ye', 245, 81, 'MA10: 5.54');
txt('t-num c-mag', 343, 81, 'MA20: 5.38');
txt('t-num c-gr', 440, 81, 'MA60: 5.26');
o.push('<path class="cfg" d="M1597 75l7 7-7 7-7-7z"/><rect class="cfg" x="1617" y="74" width="16" height="16" rx="3"/><rect x="1625" y="77" width="5" height="10" fill="#777"/>');
o.push('<path class="hi-arrow" d="M141 122L158 127M141 122l5-3M141 122l3 5"/>');
txt('t-hi', 163, 129, '5.77');

// badges
o.push('<rect x="638" y="751" width="19" height="11" fill="#0a7a14"/>');
txt('badge-t', 647.5, 756.5, '减');
o.push('<rect x="1435" y="751" width="19" height="11" fill="#0a3a70"/>');
txt('badge-t', 1444.5, 756.5, '财');

// frame lines
seg('axis', 1639, 67, 1639, 764);
seg('axis', 0, 764, 1639, 764);
seg('axis', 1641, 766, 1715, 766);
seg('axis', 1641, 766, 1641, 1283);
seg('axis', 0, 1282, 1715, 1282);

// indicator pane grid and axis
[812, 880, 949, 1016, 1084, 1152, 1219].forEach((y, k) => {
  seg('grid', 0, y, 1639, y);
  seg('tick', 1641, y, 1649, y);
  seg('tick', 1641, y + 34, 1645, y + 34);
  txt('t-ax', 1661, y + 8, (80 - k * 10).toFixed(2));
});
// indicator bars
function bars(str, start, t) {
  const n = str.trim().split(/\s+/);
  for (let j = 0; j < n.length; j += 3) {
    const top = t.y(+n[j + 1]), bot = t.y(+n[j + 2]);
    rect(n[j] === 'r' ? 'bar-red' : 'bar-blue', cx(start + j / 3) - 5, top, 10, bot - top);
  }
}
bars(barsA, 0, S1);
bars(barsB, 65, S2);
lines.forEach(([c, t, s]) => o.push(`<polyline class="${c}" points="${pairs(s, t)}"/>`));

// signal marks
[[449, 1230, 450, 1220], [658, 1248, 659, 1238], [1100, 1197, 1102, 1188], [1446, 1033, 1448, 1023]].forEach(([bx, by, tx, ty]) => {
  o.push(`<ellipse cx="${bx}" cy="${by}" rx="9.5" ry="11" fill="url(#ball)"/>`);
  txt('t-sig', tx, ty, '趋势启动');
});

// indicator legend
o.push('<circle class="dd" cx="11" cy="777" r="9"/><path class="dd-mark" d="M7 775l4 4 4-4"/>');
txt('t-leg c-grey', 27, 778, '趋势启动1');
txt('t-leg c-ye', 124, 778, '启动决策线: 75.56');
txt('t-leg c-red', 277, 778, '启动: 75.56');

// date axis
[226, 290, 350, 412, 473, 538, 602, 667, 732, 793, 874, 944, 1015, 1077].forEach(x => seg('tick', x, 1283, x, 1288));
[[226, '6'], [473, '7'], [732, '8'], [1015, '9']].forEach(([x, s]) => {
  seg('tick', x, 1283, x, 1305);
  txt('t-date', x + 2, 1302, s);
});
txt('t-date', 7, 1302, '2023年');

SVG.innerHTML = o.join('');
```
